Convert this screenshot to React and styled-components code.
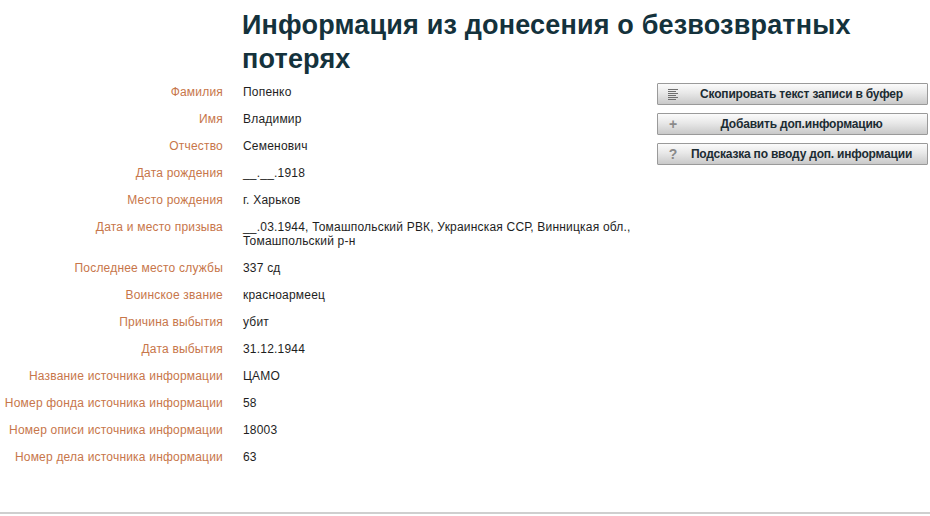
import React from "react";
import styled, { createGlobalStyle } from "styled-components";

const Global = createGlobalStyle`
  html, body { margin: 0; padding: 0; background: #fff; }
  body { font-family: "Liberation Sans", Arial, sans-serif; }
`;

const Page = styled.div`
  width: 930px;
  height: 514px;
  box-sizing: border-box;
  border-bottom: 2px solid #cfcfcf;
  display: flex;
  align-items: flex-start;
`;

const Main = styled.div`
  width: 657px;
  display: flex;
  flex-direction: column;
`;

const Title = styled.h1`
  margin: 8px 0 0 242px;
  font-size: 27px;
  line-height: 34px;
  letter-spacing: 0.18px;
  font-weight: bold;
  color: #14323c;
  width: 640px;
`;

const Table = styled.div`
  display: grid;
  grid-template-columns: 223px 400px;
  column-gap: 20px;
  margin-top: 3px;
  font-size: 12px;
  line-height: 14px;
  letter-spacing: 0.2px;
`;

const Label = styled.div`
  text-align: right;
  color: #c7764a;
  padding: 6px 0 7px;
`;

const Value = styled.div`
  color: #1e1e1e;
  padding: 6px 0 7px;
`;

const Side = styled.div`
  width: 271px;
  padding-top: 83px;
  display: flex;
  flex-direction: column;
  gap: 8px;
`;

const Button = styled.button`
  position: relative;
  height: 22px;
  width: 271px;
  box-sizing: border-box;
  border: 1px solid #9a9a9a;
  border-radius: 1px;
  background: linear-gradient(#fbfbfb 0%, #e8e8e8 45%, #c9c9c9 100%);
  font-family: "Liberation Sans", Arial, sans-serif;
  font-weight: bold;
  font-size: 12px;
  letter-spacing: -0.2px;
  color: #1c2c33;
  padding: 0 0 0 18px;
  display: flex;
  align-items: center;
  justify-content: center;
  cursor: pointer;
`;

const Icon = styled.span`
  position: absolute;
  left: 9px;
  top: 3px;
  width: 12px;
  height: 14px;
  color: #8a8a8a;
  font-size: 14px;
  font-weight: bold;
  line-height: 14px;
  display: flex;
  align-items: center;
  justify-content: center;
`;

const rows = [
  ["Фамилия", "Попенко"],
  ["Имя", "Владимир"],
  ["Отчество", "Семенович"],
  ["Дата рождения", "__.__.1918"],
  ["Место рождения", "г. Харьков"],
  ["Дата и место призыва", "__.03.1944, Томашпольский РВК, Украинская ССР, Винницкая обл., Томашпольский р-н"],
  ["Последнее место службы", "337 сд"],
  ["Воинское звание", "красноармеец"],
  ["Причина выбытия", "убит"],
  ["Дата выбытия", "31.12.1944"],
  ["Название источника информации", "ЦАМО"],
  ["Номер фонда источника информации", "58"],
  ["Номер описи источника информации", "18003"],
  ["Номер дела источника информации", "63"],
];

const LinesIcon = () => (
  <svg width="10" height="11" viewBox="0 0 10 11">
    {[0, 2, 4, 6, 8, 10].map((y, i) => (
      <rect key={y} x="0" y={y} width={i % 2 ? 8 : 10} height="1" fill="#6e6e6e" />
    ))}
  </svg>
);

export default function App() {
  return (
    <>
      <Global />
      <Page>
        <Main>
          <Title>Информация из донесения о безвозвратных потерях</Title>
          <Table>
            {rows.map(([l, v]) => (
              <React.Fragment key={l}>
                <Label>{l}</Label>
                <Value>{v}</Value>
              </React.Fragment>
            ))}
          </Table>
        </Main>
        <Side>
          <Button>
            <Icon><LinesIcon /></Icon>
            Скопировать текст записи в буфер
          </Button>
          <Button>
            <Icon>+</Icon>
            Добавить доп.информацию
          </Button>
          <Button>
            <Icon>?</Icon>
            Подсказка по вводу доп. информации
          </Button>
        </Side>
      </Page>
    </>
  );
}
